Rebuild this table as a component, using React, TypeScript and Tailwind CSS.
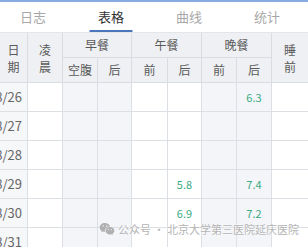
import React from "react";
import { RiWechatFill } from "react-icons/ri";

const tabs = ["日志", "表格", "曲线", "统计"];

const rows: { date: string; vals: (string | null)[] }[] = [
  { date: "8/26", vals: [null, null, null, null, null, null, "6.3", null] },
  { date: "8/27", vals: [null, null, null, null, null, null, null, null] },
  { date: "8/28", vals: [null, null, null, null, null, null, null, null] },
  { date: "8/29", vals: [null, null, null, null, "5.8", null, "7.4", null] },
  { date: "8/30", vals: [null, null, null, null, "6.9", null, "7.2", null] },
  { date: "8/31", vals: [null, null, null, null, null, null, null, null] },
];

// breakfast + dinner columns are shaded
const shaded = [false, true, true, false, false, true, true, false];

export default function App() {
  return (
    <div
      className="relative w-[308px] h-[247px] overflow-hidden bg-white"
      style={{ fontFamily: '"Noto Sans CJK SC", "Noto Sans", sans-serif' }}
    >
      <div className="h-[2px] bg-[#86acdf]" />

      {/* tabs */}
      <div className="flex h-[31px] -ml-[6px] border-b border-[#e3e5e8]">
        {tabs.map((t, i) => (
          <div
            key={t}
            className={`relative w-[78px] shrink-0 flex items-center justify-center text-[13px] ${
              i === 1 ? "text-[#333]" : "text-[#a8a8a8]"
            }`}
          >
            {t}
            {i === 1 && (
              <div className="absolute bottom-0 left-1/2 -translate-x-1/2 w-[43px] h-[2px] bg-[#4a76bb]" />
            )}
          </div>
        ))}
      </div>

      {/* table */}
      <div className="grid grid-cols-[28px_35px_35px_34px_36px_34px_35px_35px_36px] grid-rows-[25px_25px] text-[12px] text-[#5a5a5a] bg-[#eef0f3]">
        <div className="row-span-2 flex flex-col items-center justify-center leading-[17px] border-r border-b border-[#d9dce1]">
          <span>日</span>
          <span>期</span>
        </div>
        <div className="row-span-2 flex flex-col items-center justify-center leading-[17px] border-r border-b border-[#d9dce1]">
          <span>凌</span>
          <span>晨</span>
        </div>
        <div className="col-span-2 flex items-center justify-center border-r border-b border-[#d9dce1]">早餐</div>
        <div className="col-span-2 flex items-center justify-center border-r border-b border-[#d9dce1]">午餐</div>
        <div className="col-span-2 flex items-center justify-center border-r border-b border-[#d9dce1]">晚餐</div>
        <div className="row-span-2 flex flex-col items-center justify-center leading-[17px] border-b border-[#d9dce1]">
          <span>睡</span>
          <span>前</span>
        </div>
        {["空腹", "后", "前", "后", "前", "后"].map((s, i) => (
          <div key={i} className="flex items-center justify-center border-r border-b border-[#d9dce1]">
            {s}
          </div>
        ))}
      </div>

      <div className="grid grid-cols-[28px_35px_35px_34px_36px_34px_35px_35px_36px] auto-rows-[29px]">
        {rows.map((r) => (
          <React.Fragment key={r.date}>
            <div className="flex items-center justify-end overflow-hidden whitespace-nowrap pr-[5px] bg-[#f6f7f9] border-r border-b border-[#dcdfe3] text-[13px] text-[#666]">
              {r.date}
            </div>
            {r.vals.map((v, i) => (
              <div
                key={i}
                className={`flex items-center justify-center border-b border-[#dcdfe3] text-[11px] text-[#3aab82] ${
                  i < 7 ? "border-r" : ""
                } ${shaded[i] ? "bg-[#f3f5f9]" : "bg-white"}`}
              >
                {v}
              </div>
            ))}
          </React.Fragment>
        ))}
      </div>

      {/* watermark */}
      <div
        className="absolute left-[99px] top-[221px] flex items-center gap-[3px] text-[11px] text-[#b4b4b4] whitespace-nowrap"
        style={{ textShadow: "0 0 2px #fff, 0 0 2px #fff" }}
      >
        <RiWechatFill className="w-[16px] h-[16px] text-[#b0b0b0]" />
        <span>公众号 · 北京大学第三医院延庆医院</span>
      </div>
    </div>
  );
}
